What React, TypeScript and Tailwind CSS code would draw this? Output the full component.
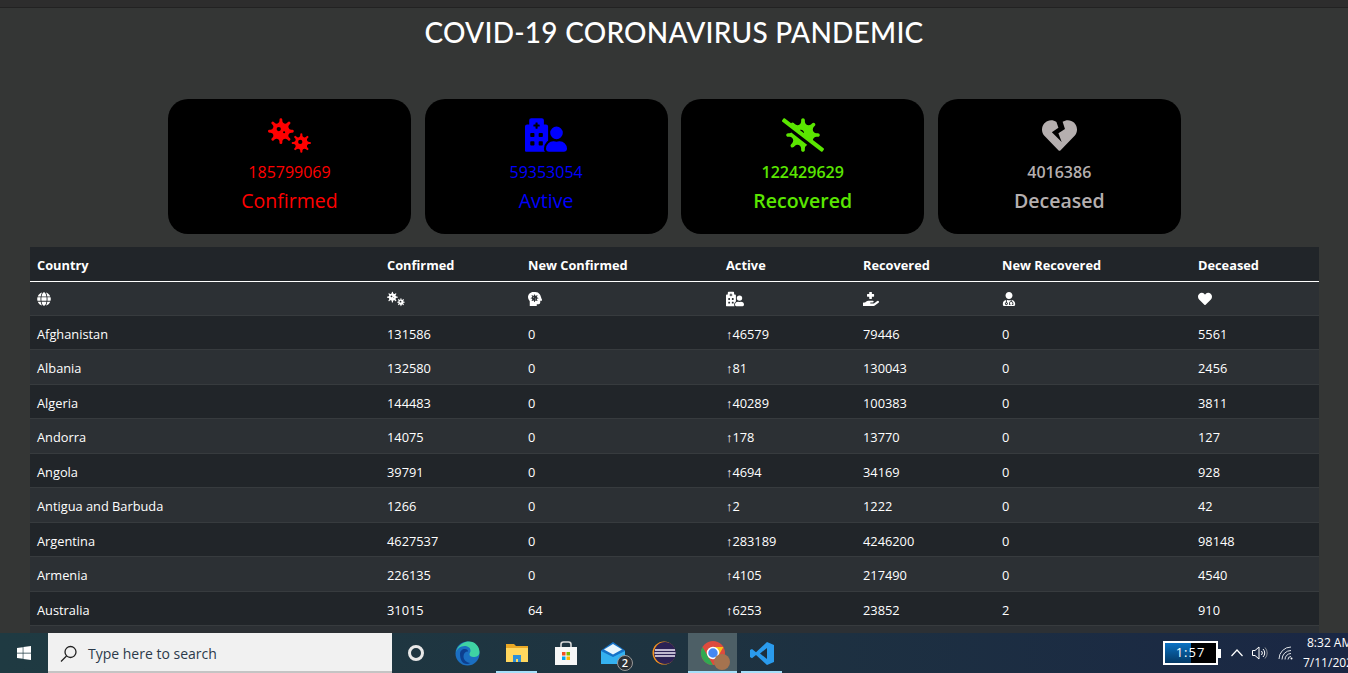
import type { ReactNode } from 'react'
import {
  FaGlobe,
  FaHandHoldingMedical,
  FaHeadSideVirus,
  FaHeart,
  FaHeartBroken,
  FaHospitalUser,
  FaUserMd,
  FaViruses,
  FaVirusSlash,
  FaWindows,
} from 'react-icons/fa'

const cards = [
  { label: 'Confirmed', value: '185799069', text: 'text-[#ff0000] font-medium', icon: <FaViruses size={43} /> },
  { label: 'Avtive', value: '59353054', text: 'text-[#0000ff] font-medium', icon: <FaHospitalUser size={42} /> },
  { label: 'Recovered', value: '122429629', text: 'text-[#5ae600] font-semibold', icon: <FaVirusSlash size={42} /> },
  { label: 'Deceased', value: '4016386', text: 'text-[#b5afaf] font-semibold', icon: <FaHeartBroken size={35} /> },
]

const headers = ['Country', 'Confirmed', 'New Confirmed', 'Active', 'Recovered', 'New Recovered', 'Deceased']

const rows = [
  ['Afghanistan', '131586', '0', '↑46579', '79446', '0', '5561'],
  ['Albania', '132580', '0', '↑81', '130043', '0', '2456'],
  ['Algeria', '144483', '0', '↑40289', '100383', '0', '3811'],
  ['Andorra', '14075', '0', '↑178', '13770', '0', '127'],
  ['Angola', '39791', '0', '↑4694', '34169', '0', '928'],
  ['Antigua and Barbuda', '1266', '0', '↑2', '1222', '0', '42'],
  ['Argentina', '4627537', '0', '↑283189', '4246200', '0', '98148'],
  ['Armenia', '226135', '0', '↑4105', '217490', '0', '4540'],
  ['Australia', '31015', '64', '↑6253', '23852', '2', '910'],
]

function Card({ label, value, text, icon }: { label: string; value: string; text: string; icon: ReactNode }) {
  return (
    <div className={`flex h-[135px] w-[243px] flex-col items-center rounded-[20px] bg-black ${text}`}>
      <div className="mt-[18px] flex h-[36px] items-center justify-center">{icon}</div>
      <div className="mt-[9px] text-[16px] leading-[20px]">{value}</div>
      <div className="mt-[6px] text-[19.5px] leading-[26px]">{label}</div>
    </div>
  )
}

function TaskIcon({ children, active, line }: { children: ReactNode; active?: boolean; line?: boolean }) {
  return (
    <div className={`relative flex h-full w-[49px] shrink-0 items-center justify-center ${active ? 'bg-[#4d5f66]' : ''}`}>
      {children}
      {line && <div className="absolute inset-x-[4px] bottom-0 h-[2px] bg-[#a6e0fa]" />}
      {active && <div className="absolute inset-x-0 bottom-0 h-[2px] bg-[#a6e0fa]" />}
    </div>
  )
}

function Taskbar() {
  return (
    <div className="flex h-[40px] shrink-0 items-stretch bg-gradient-to-r from-[#1f3a42] via-[#1e3340] to-[#1a2744] font-['Open_Sans',sans-serif] text-white">
      <div className="flex w-[48px] items-center justify-center">
        <FaWindows size={16} />
      </div>
      <div className="flex w-[344px] items-center gap-[10px] border-b-2 border-[#c4c4c4] bg-[#f1f1f1] pl-[12px] pt-[3px] text-[14px] text-[#2b3a4a]">
        <svg width="18" height="18" viewBox="0 0 18 18" fill="none" stroke="#222" strokeWidth="1.3">
          <circle cx="10.5" cy="7" r="5.5" />
          <path d="M6.5 11 1 16.5" />
        </svg>
        <span>Type here to search</span>
      </div>
      <div className="flex w-[48px] items-center justify-center">
        <div className="h-[16px] w-[16px] rounded-full border-[3px] border-[#e8e8e8]" />
      </div>
      <div className="ml-[3px] flex">
        <TaskIcon>
          <svg width="25" height="25" viewBox="0 0 25 25">
            <circle cx="12.5" cy="12.5" r="12" fill="#1b6fc2" />
            <path d="M1 11C3 3 10 .5 14 .5c6 0 10.500 5 10.500 10.500 0 4-3 5-6 5-2.500 0-4-1-4-2.500 0-2 1-2 1-4 0-3-3-4.500-6-4.500-4 0-7 2-8.500 6Z" fill="#3fd3a3" />
            <path d="M5 13c0-3 2-5 5-5 2 0 3 1 3 2.500-3 0-4.500 2-4.500 5 0 3 2.500 6 7 6.500-1 .5-2.500 1-3.500 1C7 23 5 18 5 13Z" fill="#0d3f8f" />
          </svg>
        </TaskIcon>
        <TaskIcon line>
          <svg width="24" height="20" viewBox="0 0 24 20">
            <path d="M1 1h8l2 2h12v16H1Z" fill="#e9a825" />
            <path d="M1 5h22v14H1Z" fill="#ffd75e" />
            <path d="M8 19v-7h8v7h-3v-3h-2v3Z" fill="#2b8fd9" />
          </svg>
        </TaskIcon>
        <TaskIcon>
          <svg width="24" height="25" viewBox="0 0 24 25">
            <path d="M7 7V3.500C7 2 8 1 9.500 1h5C16 1 17 2 17 3.500V7" fill="none" stroke="#d8d8d8" strokeWidth="1.600" />
            <rect x="1" y="6" width="22" height="18" fill="#f7f7f7" />
            <rect x="8" y="11" width="3.500" height="3.500" fill="#f25022" />
            <rect x="12.500" y="11" width="3.500" height="3.500" fill="#7fba00" />
            <rect x="8" y="15.500" width="3.500" height="3.500" fill="#00a4ef" />
            <rect x="12.500" y="15.500" width="3.500" height="3.500" fill="#ffb900" />
          </svg>
        </TaskIcon>
        <TaskIcon>
          <div className="relative -ml-[3px]">
            <svg width="24" height="23" viewBox="0 0 24 23">
              <path d="M12 0 24 8.500V22H0V8.500Z" fill="#1573c8" />
              <path d="M0 9 12 15 24 9V22H0Z" fill="#35b1f0" />
              <path d="M3 7.500 12 2l9 5.500L12 12.500Z" fill="#e8f6fd" />
            </svg>
            <div className="absolute -right-[8px] -bottom-[6px] flex h-[16px] w-[16px] items-center justify-center rounded-full border border-[#9a9a9a] bg-[#2d3136] text-[11px] font-semibold leading-none">
              2
            </div>
          </div>
        </TaskIcon>
        <TaskIcon>
          <svg width="24" height="24" viewBox="0 0 24 24">
            <circle cx="12" cy="12" r="11.500" fill="#f7941e" />
            <circle cx="13" cy="12" r="11" fill="#2c2255" />
            <path d="M3 9h20M2.500 12h21M3 15h20" stroke="#efeaf7" strokeWidth="1.300" />
          </svg>
        </TaskIcon>
        <TaskIcon active>
          <div className="relative">
            <svg width="24" height="24" viewBox="0 0 24 24">
              <circle cx="12" cy="12" r="12" fill="#dd4b3e" />
              <path d="M12 24A12 12 0 0 1 1.600 6L7 15.500 12 24Z" fill="#31a952" />
              <path d="M12 24 22.400 6H12l5 8Z" fill="#fbc116" />
              <circle cx="12" cy="12" r="5.500" fill="#4688f1" stroke="#fff" strokeWidth="1.500" />
            </svg>
            <div className="absolute -right-[5px] -bottom-[5px] h-[16px] w-[16px] rounded-full bg-[#a5734f]" />
          </div>
        </TaskIcon>
        <TaskIcon line>
          <svg width="25" height="25" viewBox="0 0 25 25">
            <path d="M18 1 25 4v17l-7 3L7 14l-4 3.200L1 16v-7l2-1 4 3.200Z" fill="#2a9bed" />
            <path d="M18 7v11l-7-5.500Z" fill="#1d2f3d" />
          </svg>
        </TaskIcon>
      </div>
      <div className="ml-auto flex items-center">
        <div className="relative mr-[5px] h-[24px] w-[55px] border-2 border-white bg-black">
          <div className="h-full w-[26px] bg-gradient-to-b from-[#0a72c4] to-[#053a66]" />
          <div className="absolute inset-0 flex items-center justify-center text-[13px] tracking-[1px]">1:57</div>
          <div className="absolute -right-[5px] top-[6px] h-[9px] w-[3px] bg-white" />
        </div>
        <svg className="ml-[8px]" width="12" height="8" viewBox="0 0 12 8" fill="none" stroke="#fff" strokeWidth="1.200">
          <path d="m.5 7 5.500-6 5.500 6" />
        </svg>
        <svg className="ml-[9px]" width="16" height="14" viewBox="0 0 16 14" fill="none" stroke="#fff" strokeWidth="1">
          <path d="M.5 4.500h2.500L7 1v12L3 9.500H.5ZM9.500 5a3 3 0 0 1 0 4M11 3a5.500 5.500 0 0 1 0 8" />
          <path d="M13 1.500a8 8 0 0 1 0 11" stroke="#8a8f96" />
        </svg>
        <svg className="ml-[10px]" width="16" height="14" viewBox="0 0 16 14" fill="none" stroke="#dfe3e8" strokeWidth="1">
          <path d="M1 13a12 12 0 0 1 12-12M4 13.500a9 9 0 0 1 9-9M7 13.500a6 6 0 0 1 6-6M10 13.500a3 3 0 0 1 3-3" />
          <circle cx="13.500" cy="12.500" r="1" fill="#fff" stroke="none" />
        </svg>
        <div className="ml-[9px] w-[45px] overflow-hidden whitespace-nowrap text-[12px] leading-[20px]">
          <div className="pl-[4px]">8:32 AM</div>
          <div>7/11/2021</div>
        </div>
      </div>
    </div>
  )
}

export default function App() {
  return (
    <div className="flex h-[673px] w-[1348px] flex-col overflow-hidden bg-[#343635] font-['Open_Sans',sans-serif]">
      <main className="min-h-0 flex-1 overflow-hidden">
        <div className="h-[8px] border-b border-[#222] bg-[#2d2d2d]" />
        <h1 className="mt-[6px] text-center font-['Lato',sans-serif] text-[28px] font-medium leading-[36px] tracking-[0.25px] text-white">
          COVID-19 CORONAVIRUS PANDEMIC
        </h1>
        <div className="mt-[49px] flex gap-[13.6px] pl-[168px]">
          {cards.map((c) => (
            <Card key={c.label} {...c} />
          ))}
        </div>
        <div className="mx-[30px] mt-[13px]">
          <table className="w-[1289px] table-fixed border-collapse text-[12.8px] text-white">
            <colgroup>
              <col className="w-[350px]" />
              <col className="w-[141px]" />
              <col className="w-[198px]" />
              <col className="w-[137px]" />
              <col className="w-[139px]" />
              <col className="w-[196px]" />
              <col className="w-[128px]" />
            </colgroup>
            <thead>
              <tr className="h-[34px] border-b border-white bg-[#212529]">
                {headers.map((h) => (
                  <th key={h} className="px-[7px] pt-[4px] text-left font-bold">
                    {h}
                  </th>
                ))}
              </tr>
            </thead>
            <tbody>
              <tr className="h-[34px] border-b border-[#373b3e] bg-[#2c3034]">
                <td className="px-[7px] pt-[1px]"><FaGlobe size={14} /></td>
                <td className="px-[7px] pt-[1px]"><FaViruses size={18} /></td>
                <td className="px-[7px] pt-[1px]"><FaHeadSideVirus size={14} /></td>
                <td className="px-[7px] pt-[1px]"><FaHospitalUser size={18} /></td>
                <td className="px-[7px] pt-[1px]"><FaHandHoldingMedical size={16} /></td>
                <td className="px-[7px] pt-[1px]"><FaUserMd size={14} /></td>
                <td className="px-[7px] pt-[1px]"><FaHeart size={14} /></td>
              </tr>
              {rows.map((r, i) => (
                <tr key={r[0]} className={`h-[34.500px] border-b border-[#373b3e] ${i % 2 === 0 ? 'bg-[#212529]' : 'bg-[#2c3034]'}`}>
                  {r.map((v, j) => (
                    <td key={j} className="px-[7px] pt-[4px]">
                      {v}
                    </td>
                  ))}
                </tr>
              ))}
              <tr className="h-[34.500px] bg-[#2c3034]">
                <td colSpan={7} />
              </tr>
            </tbody>
          </table>
        </div>
      </main>
      <Taskbar />
    </div>
  )
}
